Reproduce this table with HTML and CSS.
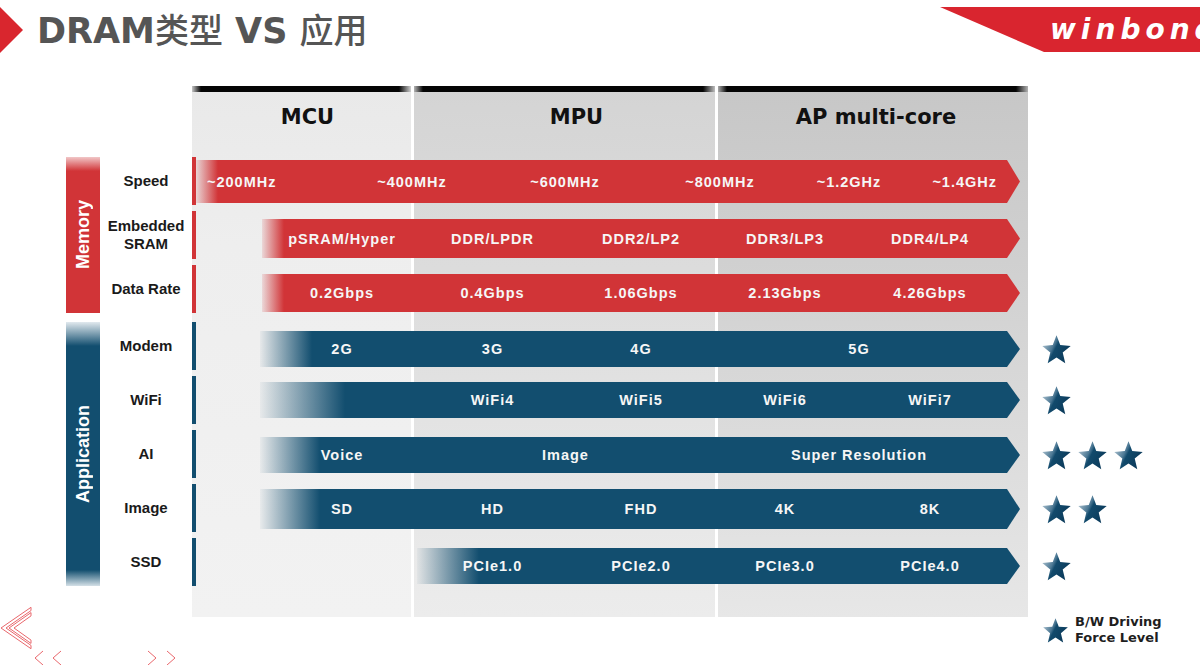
FILE: index.html
```html
<!DOCTYPE html>
<html lang="zh-CN">
<head>
<meta charset="utf-8">
<title>DRAM类型 VS 应用</title>
<link rel="stylesheet" href="styles.css">
</head>
<body>
<svg class="defs" width="0" height="0" aria-hidden="true">
  <defs>
    <linearGradient id="starGrad" x1="0" y1="0.1" x2="1" y2="0.6">
      <stop offset="0" stop-color="#c3d3dd"/>
      <stop offset="0.42" stop-color="#4c7894"/>
      <stop offset="0.52" stop-color="#124a6c"/>
      <stop offset="1" stop-color="#0b3a5a"/>
    </linearGradient>
    <symbol id="star" viewBox="0 0 24 24">
      <polygon points="12,1 14.9,8.6 23,9.2 16.8,14.4 18.8,22.6 12,18.2 5.2,22.6 7.2,14.4 1,9.2 9.1,8.6" fill="url(#starGrad)"/>
    </symbol>
  </defs>
</svg>

<header class="top">
  <div class="title-wrap">
    <svg class="title-mark" viewBox="0 0 23 46" aria-hidden="true"><polygon points="0,0 23,23 0,46" fill="#d9262e"/></svg>
    <h1 class="title">DRAM<span class="cjk">类型</span> VS <span class="cjk">应用</span></h1>
  </div>
  <div class="logo"><span class="logo-text">winbond</span></div>
</header>

<main class="board">
  <div class="columns">
    <div class="col col-mcu">
      <div class="col-bar"></div>
      <div class="col-title">MCU</div>
    </div>
    <div class="col col-mpu">
      <div class="col-bar"></div>
      <div class="col-title">MPU</div>
    </div>
    <div class="col col-ap">
      <div class="col-bar"></div>
      <div class="col-title">AP multi-core</div>
    </div>
  </div>

  <div class="band memory"><span>Memory</span></div>
  <div class="band app"><span>Application</span></div>

  <div class="row r-speed">
    <div class="label">Speed</div>
    <div class="tick red"></div>
    <div class="bar red speed">
      <span class="first">~200MHz</span><span>~400MHz</span><span>~600MHz</span><span>~800MHz</span><span>~1.2GHz</span><span class="last">~1.4GHz</span>
    </div>
  </div>

  <div class="row r-sram">
    <div class="label">Embedded<br>SRAM</div>
    <div class="tick red"></div>
    <div class="bar red">
      <span></span><span>pSRAM/Hyper</span><span>DDR/LPDR</span><span>DDR2/LP2</span><span>DDR3/LP3</span><span>DDR4/LP4</span>
    </div>
  </div>

  <div class="row r-rate">
    <div class="label">Data Rate</div>
    <div class="tick red"></div>
    <div class="bar red">
      <span></span><span>0.2Gbps</span><span>0.4Gbps</span><span>1.06Gbps</span><span>2.13Gbps</span><span>4.26Gbps</span>
    </div>
  </div>

  <div class="row r-modem">
    <div class="label">Modem</div>
    <div class="tick blue"></div>
    <div class="bar blue">
      <span></span><span>2G</span><span>3G</span><span>4G</span><span class="wide">5G</span>
    </div>
    <div class="stars"><svg class="star"><use href="#star"/></svg></div>
  </div>

  <div class="row r-wifi">
    <div class="label">WiFi</div>
    <div class="tick blue"></div>
    <div class="bar blue">
      <span></span><span></span><span>WiFi4</span><span>WiFi5</span><span>WiFi6</span><span>WiFi7</span>
    </div>
    <div class="stars"><svg class="star"><use href="#star"/></svg></div>
  </div>

  <div class="row r-ai">
    <div class="label">AI</div>
    <div class="tick blue"></div>
    <div class="bar blue">
      <span></span><span>Voice</span><span class="wide">Image</span><span class="wide">Super Resolution</span>
    </div>
    <div class="stars"><svg class="star"><use href="#star"/></svg><svg class="star"><use href="#star"/></svg><svg class="star"><use href="#star"/></svg></div>
  </div>

  <div class="row r-image">
    <div class="label">Image</div>
    <div class="tick blue"></div>
    <div class="bar blue">
      <span></span><span>SD</span><span>HD</span><span>FHD</span><span>4K</span><span>8K</span>
    </div>
    <div class="stars"><svg class="star"><use href="#star"/></svg><svg class="star"><use href="#star"/></svg></div>
  </div>

  <div class="row r-ssd">
    <div class="label">SSD</div>
    <div class="tick blue"></div>
    <div class="bar blue">
      <span></span><span></span><span>PCIe1.0</span><span>PCIe2.0</span><span>PCIe3.0</span><span>PCIe4.0</span>
    </div>
    <div class="stars"><svg class="star"><use href="#star"/></svg></div>
  </div>

  <div class="legend">
    <svg class="star small"><use href="#star"/></svg>
    <div class="legend-text">B/W Driving<br>Force Level</div>
  </div>
</main>

<svg class="corner-deco" viewBox="0 600 180 65" aria-hidden="true">
  <g fill="none" stroke="#e9676c" stroke-width="1">
    <polygon points="31,607.3 1,628 31,648.7 31,645.4 6,628 31,610.6"/>
    <polygon points="31,612.6 9,628 31,643.4 31,640.1 14,628 31,615.9"/>
    <polyline points="43,651 35,658 43,665"/>
    <polyline points="61,651 53,658 61,665"/>
    <polyline points="148,651 156,658 148,665"/>
    <polyline points="167,651 175,658 167,665"/>
  </g>
</svg>
</body>
</html>
```

FILE: styles.css
```css
html, body {
  margin: 0;
  padding: 0;
}

body {
  width: 1200px;
  height: 665px;
  overflow: hidden;
  position: relative;
  background: #ffffff;
  font-family: "Liberation Sans", Arial, sans-serif;
}

.defs {
  position: absolute;
  width: 0;
  height: 0;
  overflow: hidden;
}

/* ---------- header ---------- */
.top {
  display: flex;
  justify-content: space-between;
  align-items: flex-start;
  height: 86px;
  box-sizing: border-box;
  padding-top: 6px;
}

.title-wrap {
  display: flex;
  align-items: center;
  gap: 14px;
}

.title-mark {
  display: block;
  width: 23px;
  height: 46px;
}

.title {
  margin: 0;
  font-family: "DejaVu Sans", "Noto Sans CJK SC", sans-serif;
  font-weight: bold;
  font-size: 35px;
  line-height: 46px;
  color: #555555;
  white-space: nowrap;
}

.cjk {
  font-family: "Noto Sans CJK SC", sans-serif;
  font-weight: 500;
  font-size: 34px;
}

.logo {
  margin-top: 1px;
  width: 260px;
  height: 45px;
  box-sizing: border-box;
  padding-left: 110px;
  background: #d9252f;
  clip-path: polygon(0 0, 100% 0, 100% 100%, 104px 100%);
  display: flex;
  align-items: center;
  overflow: hidden;
}

.logo-text {
  font-family: "DejaVu Sans", sans-serif;
  font-style: italic;
  font-weight: bold;
  font-size: 28px;
  letter-spacing: 5px;
  color: #ffffff;
  white-space: nowrap;
}

/* ---------- board ---------- */
.board {
  display: grid;
  grid-template-columns: 34px 92px 4px 832px 172px;
  grid-template-rows: 68px 54px 54px 54px 3px 54px 54px 54px 54px 54px 28px 40px;
  margin-left: 66px;
}

.columns {
  grid-column: 3 / 5;
  grid-row: 1 / 12;
  display: flex;
  gap: 3px;
}

.col {
  display: flex;
  flex-direction: column;
}

.col-mcu {
  width: 219px;
  background: linear-gradient(180deg, #e9e9e9 0, #eeeeee 30%, #f2f2f2 100%);
}

.col-mpu {
  width: 301px;
  background: linear-gradient(180deg, #d4d4d4 0, #dbdbdb 30%, #ececec 100%);
}

.col-ap {
  width: 310px;
  background: linear-gradient(180deg, #c7c7c7 0, #cfcfcf 30%, #e7e7e7 100%);
}

.col-bar {
  height: 6px;
  background: linear-gradient(90deg, rgba(0,0,0,0.15) 0, #050505 9px, #050505 calc(100% - 12px), rgba(0,0,0,0.1) 100%);
}

.col-title {
  height: 50px;
  display: flex;
  align-items: center;
  justify-content: center;
  font-family: "DejaVu Sans", sans-serif;
  font-weight: bold;
  font-size: 21px;
  color: #111111;
}

.col-mcu .col-title { padding-left: 12px; }
.col-mpu .col-title { padding-left: 24px; }
.col-ap .col-title { padding-left: 6px; }

/* side bands */
.band {
  grid-column: 1;
  margin: 3px 0;
  display: flex;
  align-items: center;
  justify-content: center;
}

.band span {
  writing-mode: vertical-rl;
  transform: rotate(180deg);
  font-weight: bold;
  font-size: 18px;
  color: #ffffff;
}

.band.memory {
  grid-row: 2 / 5;
  background: linear-gradient(180deg, #f1c6c7 0, #d13437 14px, #d13437 100%);
}

.band.app {
  grid-row: 6 / 11;
  background: linear-gradient(180deg, #e1e9ee 0, #124e6f 24px, #124e6f calc(100% - 16px), #d4e0e7 100%);
}

/* rows */
.row {
  display: contents;
}

.row > * {
  grid-row: inherit;
}

.r-speed { grid-row: 2; --mt: 6px;  --h: 43px; --start: 0px;   --fade: 22px; }
.r-sram  { grid-row: 3; --mt: 11px; --h: 39px; --start: 66px;  --fade: 22px; }
.r-rate  { grid-row: 4; --mt: 12px; --h: 38px; --start: 66px;  --fade: 22px; }
.r-modem { grid-row: 6; --mt: 12px; --h: 36px; --start: 64px;  --fade: 52px; }
.r-wifi  { grid-row: 7; --mt: 9px;  --h: 36px; --start: 64px;  --fade: 85px; }
.r-ai    { grid-row: 8; --mt: 10px; --h: 36px; --start: 64px;  --fade: 60px; }
.r-image { grid-row: 9; --mt: 8px;  --h: 40px; --start: 64px;  --fade: 60px; }
.r-ssd   { grid-row: 10; --mt: 13px; --h: 36px; --start: 221px; --fade: 62px; }

.label {
  grid-column: 2;
  display: flex;
  align-items: center;
  justify-content: center;
  text-align: center;
  font-weight: bold;
  font-size: 15px;
  line-height: 18px;
  color: #1a1a1a;
}

.tick {
  grid-column: 3;
  margin: 3px 0;
}

.tick.red { background: #d13437; }
.tick.blue { background: #124e6f; }

.bar {
  grid-column: 4;
  align-self: start;
  margin-top: var(--mt);
  height: var(--h);
  margin-right: 8px;
  display: grid;
  grid-template-columns: 71px 150px 151px 146px 142px 148px 1fr;
  align-items: center;
  clip-path: polygon(0 0, calc(100% - 13px) 0, 100% 50%, calc(100% - 13px) 100%, 0 100%);
}

.bar.red {
  background: linear-gradient(90deg, transparent var(--start), rgba(209,52,55,0.12) var(--start), #d13437 calc(var(--start) + var(--fade)));
}

.bar.blue {
  background: linear-gradient(90deg, transparent var(--start), rgba(18,78,111,0.04) var(--start), #124e6f calc(var(--start) + var(--fade)));
}

.bar span {
  text-align: center;
  white-space: nowrap;
  font-weight: bold;
  font-size: 14.5px;
  letter-spacing: 1px;
  color: #f6f6f6;
}

.bar span.wide {
  grid-column: span 2;
}

.bar.speed {
  grid-template-columns: 130px 172px 134px 176px 82px 1fr;
}

.bar.speed span.first {
  text-align: left;
  padding-left: 11px;
}

.bar.speed span.last {
  text-align: right;
  padding-right: 23px;
}

/* stars */
.stars {
  grid-column: 5;
  align-self: start;
  margin-top: var(--mt);
  height: var(--h);
  display: flex;
  align-items: center;
  gap: 5px;
  padding-left: 13px;
}

.star {
  display: block;
  width: 31px;
  height: 31px;
}

.star.small {
  width: 27px;
  height: 27px;
}

.legend {
  grid-column: 5;
  grid-row: 11 / 13;
  align-self: end;
  margin-bottom: 11px;
  display: flex;
  align-items: center;
  gap: 6px;
  padding-left: 14px;
}

.legend-text {
  font-family: "DejaVu Sans", sans-serif;
  font-weight: bold;
  font-size: 13px;
  line-height: 16px;
  color: #1e1e1e;
  white-space: nowrap;
}

/* decorative corner chevrons */
.corner-deco {
  position: absolute;
  left: 0;
  top: 600px;
  width: 180px;
  height: 65px;
}
```
